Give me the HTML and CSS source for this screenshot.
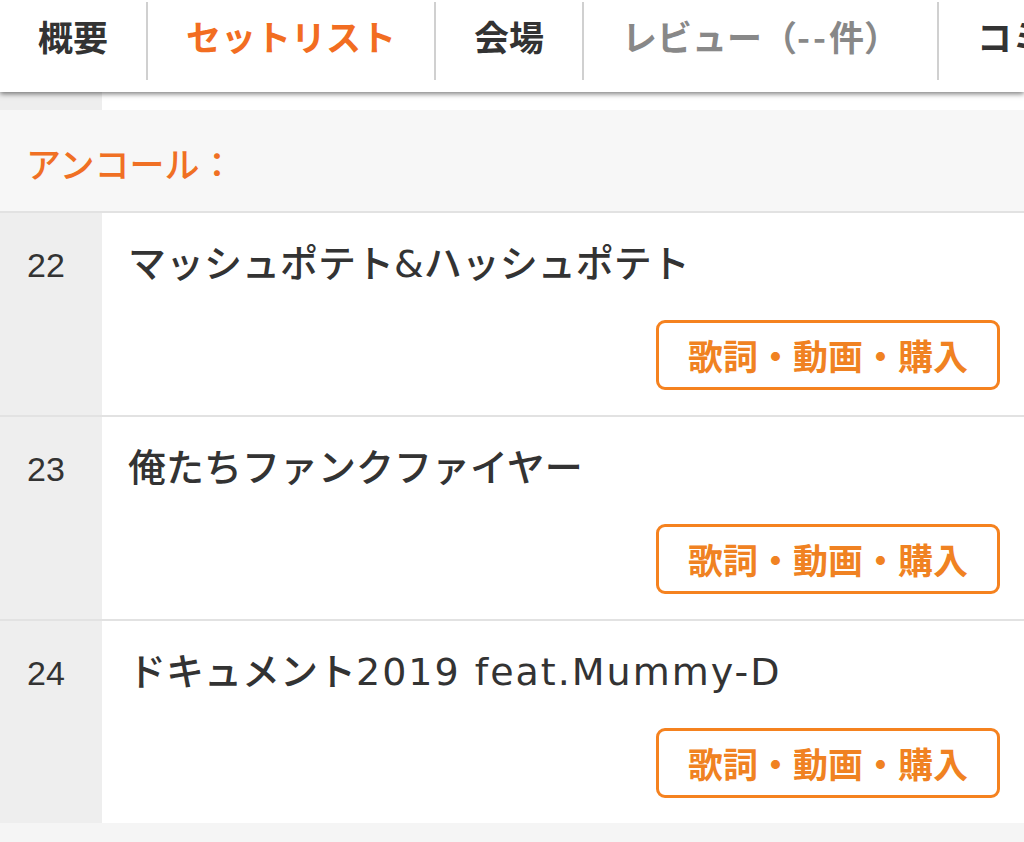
FILE: index.html
```html
<!DOCTYPE html>
<html lang="ja">

<head>
    <meta charset="UTF-8">
    <title>セットリスト</title>
    <link rel="stylesheet" href="styles.css">
</head>

<body>
    <!--タブメニュー-->
    <nav class="tabs">
        <a class="tab" href="">概要</a>
        <span class="sep"></span>
        <a class="tab on" href="">セットリスト</a>
        <span class="sep"></span>
        <a class="tab" href="">会場</a>
        <span class="sep"></span>
        <a class="tab off" href="">レビュー（<span class="dash">--</span>件）</a>
        <span class="sep"></span>
        <a class="tab" href="">コミュニティ</a>
    </nav>

    <!--前の曲(上に隠れている)-->
    <div class="row peek">
        <div class="num"></div>
        <div class="body"></div>
    </div>

    <!--アンコール-->
    <h2 class="part">アンコール：</h2>

    <ul class="songs">
        <li class="row">
            <div class="num">22</div>
            <div class="body">
                <p class="title">マッシュポテト&amp;ハッシュポテト</p>
                <a class="btn" href="">歌詞・動画・購入</a>
            </div>
        </li>
        <li class="row">
            <div class="num">23</div>
            <div class="body">
                <p class="title">俺たちファンクファイヤー</p>
                <a class="btn" href="">歌詞・動画・購入</a>
            </div>
        </li>
        <li class="row">
            <div class="num">24</div>
            <div class="body">
                <p class="title">ドキュメント<span class="en">2019 feat.Mummy-D</span></p>
                <a class="btn" href="">歌詞・動画・購入</a>
            </div>
        </li>
    </ul>
</body>

</html>
```

FILE: styles.css
```css
html,
body,
h2,
ul,
p {
    margin: 0;
    padding: 0;
}

body {
    background: #f5f5f5;
    color: #333;
    font-family: "Noto Sans CJK JP", sans-serif;
}

/*タブメニュー*/
.tabs {
    position: relative;
    z-index: 2;
    display: flex;
    height: 92px;
    background: #fff;
    box-shadow: 0 2px 5px rgba(0, 0, 0, 0.5);
    overflow: hidden;
    white-space: nowrap;
}

.tab {
    flex: none;
    padding: 18px 38px 0;
    color: #333;
    text-decoration: none;
    font-size: 35px;
    line-height: 35px;
    font-weight: 700;
}

.tab.on {
    color: #f26d21;
}

.tab.off {
    color: #888;
}

.dash {
    letter-spacing: 3px;
}

.sep {
    flex: none;
    width: 2px;
    height: 78px;
    margin-top: 2px;
    background: #d0d0d0;
}

/*曲の行*/
.row {
    display: flex;
    background: #fff;
}

.row.peek {
    height: 18px;
}

.num {
    flex: none;
    width: 102px;
    padding: 35px 0 0 27px;
    box-sizing: border-box;
    background: #eee;
    font: 34px/34px "Liberation Sans", sans-serif;
    color: #333;
}

.peek .num {
    padding: 0;
}

.body {
    flex: 1;
    display: flex;
    flex-direction: column;
    align-items: flex-end;
    padding: 32px 24px 25px 26px;
}

.peek .body {
    padding: 0;
}

/*アンコール見出し*/
.part {
    padding: 35px 26px 31px;
    background: #f7f7f7;
    border-bottom: 2px solid #e2e2e2;
    color: #f07024;
    font-size: 35px;
    line-height: 35px;
    font-weight: 500;
}

.songs {
    list-style: none;
}

.songs .row + .row {
    border-top: 2px solid #e2e2e2;
}

.title {
    align-self: stretch;
    font: 500 38px/38px "DejaVu Sans", "Noto Sans CJK JP", sans-serif;
    color: #333;
    white-space: nowrap;
}

.title .en {
    letter-spacing: 2px;
}

/*歌詞ボタン*/
.btn {
    margin-top: 37px;
    padding: 0 29px;
    height: 64px;
    border: 3px solid #f5821f;
    border-radius: 9px;
    color: #f08222;
    text-decoration: none;
    font-size: 35px;
    line-height: 64px;
    font-weight: 700;
}
```
